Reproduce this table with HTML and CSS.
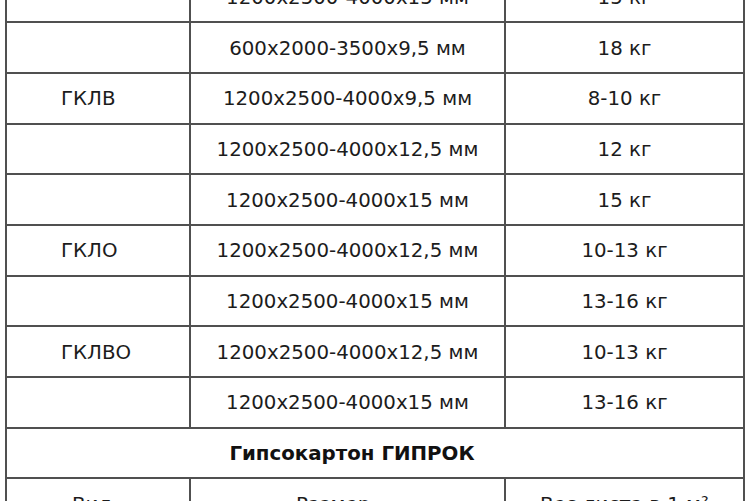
FILE: index.html
```html
<!DOCTYPE html>
<html lang="ru">
<head>
<meta charset="utf-8">
<title>Гипсокартон</title>
<link rel="stylesheet" href="styles.css">
</head>
<body>
<table class="spec">
  <colgroup>
    <col class="c-type">
    <col class="c-size">
    <col class="c-weight">
  </colgroup>
  <tbody>
    <tr><td class="type"></td><td>1200x2500-4000x15 мм</td><td>15 кг</td></tr>
    <tr><td class="type"></td><td>600x2000-3500x9,5 мм</td><td>18 кг</td></tr>
    <tr><td class="type">ГКЛВ</td><td>1200x2500-4000x9,5 мм</td><td>8-10 кг</td></tr>
    <tr><td class="type"></td><td>1200x2500-4000x12,5 мм</td><td>12 кг</td></tr>
    <tr><td class="type"></td><td>1200x2500-4000x15 мм</td><td>15 кг</td></tr>
    <tr><td class="type">ГКЛО</td><td>1200x2500-4000x12,5 мм</td><td>10-13 кг</td></tr>
    <tr><td class="type"></td><td>1200x2500-4000x15 мм</td><td>13-16 кг</td></tr>
    <tr><td class="type">ГКЛВО</td><td>1200x2500-4000x12,5 мм</td><td>10-13 кг</td></tr>
    <tr><td class="type"></td><td>1200x2500-4000x15 мм</td><td>13-16 кг</td></tr>
    <tr><td class="title" colspan="3">Гипсокартон ГИПРОК</td></tr>
    <tr class="head"><td class="type-head">Вид</td><td class="size-head">Размер</td><td>Вес листа в 1 м²</td></tr>
  </tbody>
</table>
</body>
</html>
```

FILE: styles.css
```css
html, body {
  margin: 0;
  padding: 0;
  background: #ffffff;
  overflow: hidden;
}

body {
  font-family: "DejaVu Sans", Verdana, sans-serif;
  font-size: 19.8px;
  color: #1c1c1c;
}

.spec {
  border-collapse: collapse;
  table-layout: fixed;
  width: 738px;
  margin-left: 5px;
  margin-top: -29.5px;
}

.c-type { width: 184px; }
.c-size { width: 315px; }
.c-weight { width: 239px; }

.spec td {
  border: 2px solid #505050;
  height: 50.7px;
  padding: 1px 0 0 0;
  text-align: center;
  vertical-align: middle;
  white-space: nowrap;
  box-sizing: border-box;
}

.spec td.type {
  text-align: left;
  padding-left: 54px;
}

.spec td.title {
  font-weight: bold;
  color: #111111;
  padding-right: 46px;
}

.spec td.type-head {
  text-align: left;
  padding-left: 65px;
}

.spec td.size-head {
  text-align: left;
  padding-left: 105px;
}
```
